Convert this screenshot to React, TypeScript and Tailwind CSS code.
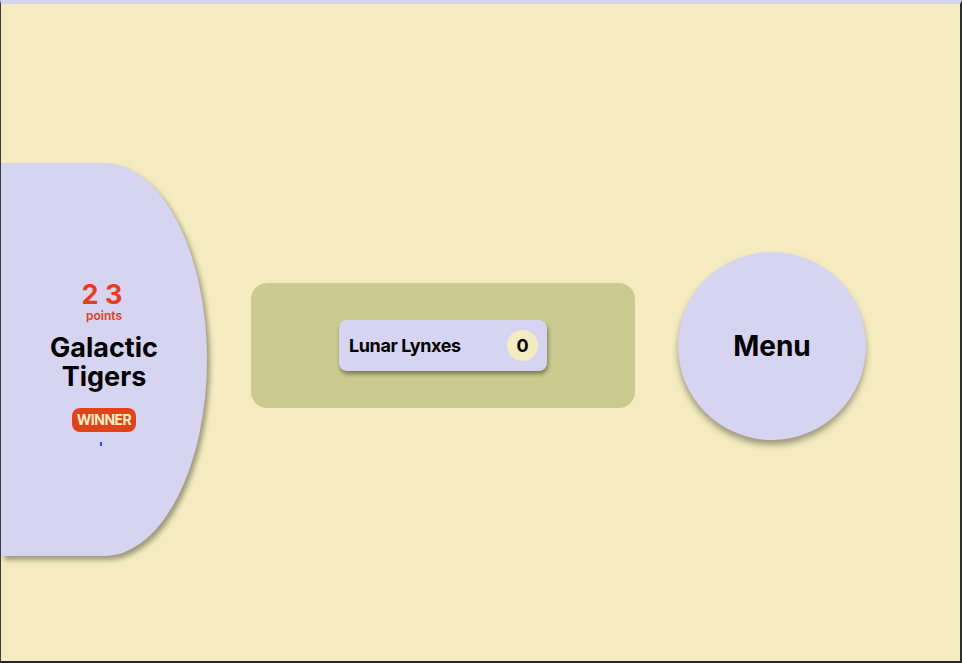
import React from "react";

export default function App() {
  return (
    <div
      className="h-[663px] w-[962px] bg-[#f4ecc0] border-t-4 border-t-[#d7d4f1] border-l border-l-[#3a3a3a] border-r-2 border-r-[#2e2e2e] border-b-2 border-b-[#262626] overflow-hidden"
      style={{ fontFamily: "Inter, 'Liberation Sans', sans-serif" }}
    >
      <div className="flex items-start pt-[159px]">
        {/* winner side panel */}
        <div className="w-[206px] h-[393px] shrink-0 bg-[#d7d4f1] rounded-r-[50%] shadow-[3px_4px_5px_rgba(0,0,0,0.35)] flex flex-col items-center justify-center pt-[8px]">
          <div className="text-[#e23f1c] font-bold text-[27px] leading-[28px] mr-[4px]">
            2 3
          </div>
          <div className="text-[#e23f1c] font-semibold text-xs leading-[13px]">
            points
          </div>
          <div className="mt-[11px] text-black font-bold text-[27px] leading-[29px] text-center">
            Galactic
            <br />
            Tigers
          </div>
          <div className="mt-[17px] bg-[#e0431a] text-[#f6efc6] font-bold text-sm tracking-[-0.5px] leading-[24px] px-[5px] rounded-lg">
            WINNER
          </div>
          <span className="mt-[10px] mr-[7px] w-[2px] h-[4px] bg-blue-600" />
        </div>

        {/* remaining teams */}
        <div className="ml-[44px] mt-[120px] w-[384px] h-[125px] shrink-0 bg-[#cbcb91] rounded-2xl flex items-center justify-center">
          <div className="w-[208px] h-[51px] bg-[#d7d4f1] rounded-lg shadow-[1px_3px_4px_rgba(0,0,0,0.4)] flex items-center justify-between pl-[10px] pr-[9px]">
            <span className="text-black font-bold text-lg tracking-[-0.4px]">Lunar Lynxes</span>
            <span className="w-[31px] h-[31px] rounded-full bg-[#f4ecc0] flex items-center justify-center text-black font-bold text-lg">
              0
            </span>
          </div>
        </div>

        {/* menu */}
        <button className="ml-[43px] mt-[89px] w-[188px] h-[188px] shrink-0 rounded-full bg-[#d7d4f1] shadow-[0_5px_6px_rgba(0,0,0,0.35)] flex items-center justify-center text-black font-bold text-[28px]">
          Menu
        </button>
      </div>
    </div>
  );
}
